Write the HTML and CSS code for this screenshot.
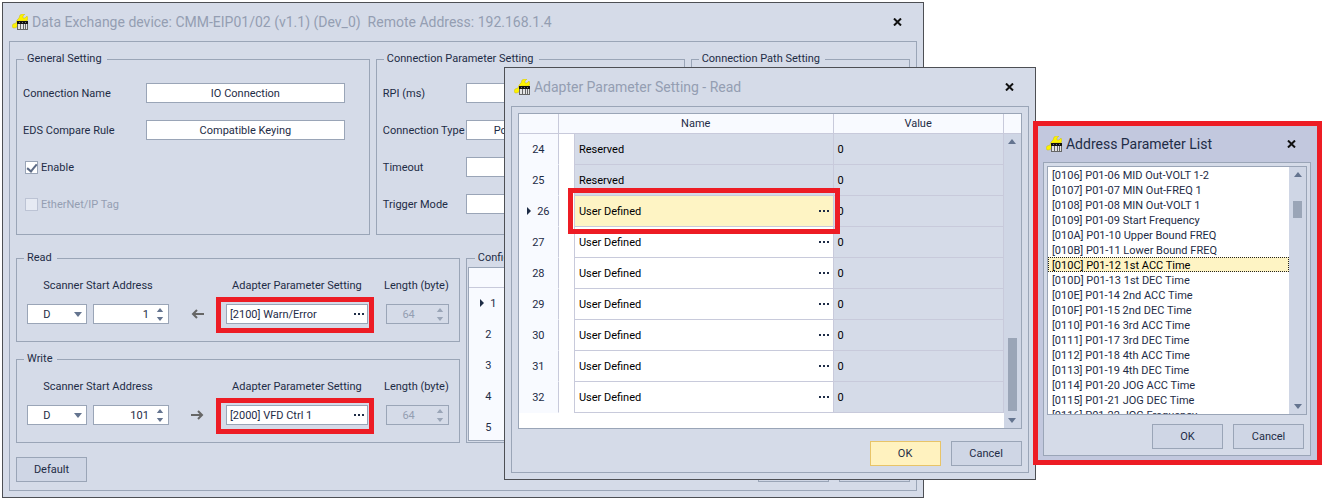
FILE: index.html
```html
<!DOCTYPE html>
<html lang="en">
  <head>
    <meta charset="UTF-8" />
    <meta name="viewport" content="width=device-width, initial-scale=1.0" />
    <title>Data Exchange</title>
    <link rel="stylesheet" href="styles.css">
  </head>
  <body>
    <!-- shared icons -->
    <svg class="sprite" aria-hidden="true">
      <symbol id="icon-app" viewBox="0 0 16 16">
        <path d="M1 14 L0 12 L1 10 L4 9 L5 6 L7 4 L8 1 L10 0 H13 L11 2 L11 4 H13 L15 2 L16 4 L15 7 H7 L6 10 L5 13 L3 14 Z" fill="#fdf200" stroke="#c4b62a" stroke-width="0.5" />
        <path d="M5 7h11v3h-11z" fill="#111" />
        <path d="M5 10h11v6h-11z" fill="#666" />
        <path d="M6 10h2v5h-2zM9 10h2v5h-2zM12 10h1v5h-1zM14 10h1v5h-1z" fill="#e4e4e4" />
        <path d="M7 8h1v1h-1zM10 8h1v1h-1zM13 8h1v1h-1z" fill="#777" />
      </symbol>
      <symbol id="icon-close" viewBox="0 0 9 8">
        <path d="M1 0.5 L8 7.5 M8 0.5 L1 7.5" stroke="#111" stroke-width="2" fill="none" />
      </symbol>
      <symbol id="icon-up" viewBox="0 0 8 5"><path d="M0 5 L4 0 L8 5 Z" fill="currentColor" /></symbol>
      <symbol id="icon-down" viewBox="0 0 8 5"><path d="M0 0 H8 L4 5 Z" fill="currentColor" /></symbol>
      <symbol id="icon-dots" viewBox="0 0 10 2"><path d="M0 0h2v2h-2zM4 0h2v2h-2zM8 0h2v2h-2z" fill="#1e2c46" /></symbol>
      <symbol id="icon-row" viewBox="0 0 4 8"><path d="M0 0 L4 4 L0 8 Z" fill="#1e2c46" /></symbol>
      <symbol id="icon-left" viewBox="0 0 13 10">
        <path d="M6 1 L2 5 L6 9 M2 5 H13" stroke="#666" stroke-width="2" fill="none" />
      </symbol>
      <symbol id="icon-right" viewBox="0 0 13 10">
        <path d="M7 1 L11 5 L7 9 M11 5 H0" stroke="#666" stroke-width="2" fill="none" />
      </symbol>
    </svg>

    <main class="desktop">
      <section class="window window-main">
        <header class="titlebar">
          <svg class="app-icon"><use href="#icon-app" /></svg>
          <h1>Data Exchange device: CMM-EIP01/02 (v1.1) (Dev_0)&nbsp; Remote Address: 192.168.1.4</h1>
          <button class="close" aria-label="Close"><svg><use href="#icon-close" /></svg></button>
        </header>
        <div class="panel">
          <div class="top-groups">
            <fieldset class="general">
              <legend>General Setting</legend>
              <div class="fields">
                <div class="field">
                  <label for="connName">Connection Name</label>
                  <input class="box" id="connName" type="text" value="IO Connection" />
                </div>
                <div class="field">
                  <label for="edsRule">EDS Compare Rule</label>
                  <input class="box" id="edsRule" type="text" value="Compatible Keying" />
                </div>
                <label class="check"><input type="checkbox" checked /><span>Enable</span></label>
                <label class="check disabled"><input type="checkbox" disabled /><span>EtherNet/IP Tag</span></label>
              </div>
            </fieldset>

            <fieldset class="connection">
              <legend>Connection Parameter Setting</legend>
              <div class="fields">
                <div class="field">
                  <label for="rpi">RPI (ms)</label>
                  <input class="box" id="rpi" type="text" />
                </div>
                <div class="field">
                  <label for="connType">Connection Type</label>
                  <input class="box" id="connType" type="text" value="Point to Point" />
                </div>
                <div class="field">
                  <label for="timeout">Timeout</label>
                  <input class="box" id="timeout" type="text" />
                </div>
                <div class="field">
                  <label for="trigger">Trigger Mode</label>
                  <input class="box" id="trigger" type="text" />
                </div>
              </div>
            </fieldset>

            <fieldset>
              <legend>Connection Path Setting</legend>
            </fieldset>
          </div>

          <div class="bottom-groups">
            <div class="transfers">
              <fieldset>
                <legend>Read</legend>
                <div class="transfer">
                  <label for="readAddress">Scanner Start Address</label>
                  <label class="col-adapter" for="readParam">Adapter Parameter Setting</label>
                  <label class="col-length" for="readLength">Length (byte)</label>
                  <div class="address">
                    <div class="box combo">
                      <select aria-label="Read device"><option>D</option></select>
                      <svg class="arrow"><use href="#icon-down" /></svg>
                    </div>
                    <div class="box spin">
                      <input id="readAddress" type="number" value="1" />
                      <span class="spin-arrows">
                        <button aria-label="Increase"><svg class="arrow"><use href="#icon-up" /></svg></button>
                        <button aria-label="Decrease"><svg class="arrow"><use href="#icon-down" /></svg></button>
                      </span>
                    </div>
                  </div>
                  <svg class="direction"><use href="#icon-left" /></svg>
                  <div class="box picker marked">
                    <input id="readParam" type="text" value="[2100] Warn/Error" />
                    <button class="dots" aria-label="Browse"><svg><use href="#icon-dots" /></svg></button>
                  </div>
                  <div class="box spin length">
                    <input id="readLength" type="number" value="64" disabled />
                    <span class="spin-arrows">
                      <button disabled aria-label="Increase"><svg class="arrow"><use href="#icon-up" /></svg></button>
                      <button disabled aria-label="Decrease"><svg class="arrow"><use href="#icon-down" /></svg></button>
                    </span>
                  </div>
                </div>
              </fieldset>

              <fieldset>
                <legend>Write</legend>
                <div class="transfer">
                  <label for="writeAddress">Scanner Start Address</label>
                  <label class="col-adapter" for="writeParam">Adapter Parameter Setting</label>
                  <label class="col-length" for="writeLength">Length (byte)</label>
                  <div class="address">
                    <div class="box combo">
                      <select aria-label="Write device"><option>D</option></select>
                      <svg class="arrow"><use href="#icon-down" /></svg>
                    </div>
                    <div class="box spin">
                      <input id="writeAddress" type="number" value="101" />
                      <span class="spin-arrows">
                        <button aria-label="Increase"><svg class="arrow"><use href="#icon-up" /></svg></button>
                        <button aria-label="Decrease"><svg class="arrow"><use href="#icon-down" /></svg></button>
                      </span>
                    </div>
                  </div>
                  <svg class="direction"><use href="#icon-right" /></svg>
                  <div class="box picker marked">
                    <input id="writeParam" type="text" value="[2000] VFD Ctrl 1" />
                    <button class="dots" aria-label="Browse"><svg><use href="#icon-dots" /></svg></button>
                  </div>
                  <div class="box spin length">
                    <input id="writeLength" type="number" value="64" disabled />
                    <span class="spin-arrows">
                      <button disabled aria-label="Increase"><svg class="arrow"><use href="#icon-up" /></svg></button>
                      <button disabled aria-label="Decrease"><svg class="arrow"><use href="#icon-down" /></svg></button>
                    </span>
                  </div>
                </div>
              </fieldset>
            </div>

            <fieldset class="config">
              <legend>Configuration</legend>
              <div class="grid-view config-list">
                <table>
                  <thead><tr><th class="num"></th><th></th></tr></thead>
                  <tbody>
                    <tr><td class="num"><svg class="row-mark"><use href="#icon-row" /></svg>1</td><td></td></tr>
                    <tr><td class="num">2</td><td></td></tr>
                    <tr><td class="num">3</td><td></td></tr>
                    <tr><td class="num">4</td><td></td></tr>
                    <tr><td class="num">5</td><td></td></tr>
                  </tbody>
                </table>
              </div>
            </fieldset>
          </div>

          <footer class="actions">
            <button class="btn btn-default">Default</button>
            <button class="btn">OK</button>
            <button class="btn">Cancel</button>
          </footer>
        </div>
      </section>

      <section class="window window-adapter">
        <header class="titlebar">
          <svg class="app-icon"><use href="#icon-app" /></svg>
          <h1>Adapter Parameter Setting - Read</h1>
          <button class="close" aria-label="Close"><svg><use href="#icon-close" /></svg></button>
        </header>
        <div class="panel">
          <div class="grid-view">
            <table>
              <colgroup>
                <col class="w-num" /><col class="w-indent" /><col /><col class="w-value" />
              </colgroup>
              <thead>
                <tr><th></th><th colspan="2">Name</th><th>Value</th></tr>
              </thead>
              <tbody>
                <tr class="reserved"><td class="num">24</td><td class="indent"></td><td class="name">Reserved</td><td class="value">0</td></tr>
                <tr class="reserved"><td class="num">25</td><td class="indent"></td><td class="name">Reserved</td><td class="value">0</td></tr>
                <tr class="selected">
                  <td class="num"><svg class="row-mark"><use href="#icon-row" /></svg>26</td><td class="indent"></td>
                  <td class="name marked"><div class="cell">User Defined<button class="dots" aria-label="Browse"><svg><use href="#icon-dots" /></svg></button></div></td>
                  <td class="value">0</td>
                </tr>
                <tr><td class="num">27</td><td class="indent"></td><td class="name"><div class="cell">User Defined<button class="dots" aria-label="Browse"><svg><use href="#icon-dots" /></svg></button></div></td><td class="value">0</td></tr>
                <tr><td class="num">28</td><td class="indent"></td><td class="name"><div class="cell">User Defined<button class="dots" aria-label="Browse"><svg><use href="#icon-dots" /></svg></button></div></td><td class="value">0</td></tr>
                <tr><td class="num">29</td><td class="indent"></td><td class="name"><div class="cell">User Defined<button class="dots" aria-label="Browse"><svg><use href="#icon-dots" /></svg></button></div></td><td class="value">0</td></tr>
                <tr><td class="num">30</td><td class="indent"></td><td class="name"><div class="cell">User Defined<button class="dots" aria-label="Browse"><svg><use href="#icon-dots" /></svg></button></div></td><td class="value">0</td></tr>
                <tr><td class="num">31</td><td class="indent"></td><td class="name"><div class="cell">User Defined<button class="dots" aria-label="Browse"><svg><use href="#icon-dots" /></svg></button></div></td><td class="value">0</td></tr>
                <tr><td class="num">32</td><td class="indent"></td><td class="name"><div class="cell">User Defined<button class="dots" aria-label="Browse"><svg><use href="#icon-dots" /></svg></button></div></td><td class="value">0</td></tr>
              </tbody>
            </table>
            <div class="scroll-column">
              <div class="scroll-head"></div>
              <div class="scrollbar at-end">
                <svg class="arrow"><use href="#icon-up" /></svg>
                <div class="thumb"></div>
                <svg class="arrow"><use href="#icon-down" /></svg>
              </div>
            </div>
          </div>
          <footer class="actions">
            <button class="btn primary">OK</button>
            <button class="btn">Cancel</button>
          </footer>
        </div>
      </section>

      <section class="window window-list">
        <header class="titlebar">
          <svg class="app-icon"><use href="#icon-app" /></svg>
          <h1>Address Parameter List</h1>
          <button class="close" aria-label="Close"><svg><use href="#icon-close" /></svg></button>
        </header>
        <div class="panel">
          <div class="list-view">
            <select size="17" aria-label="Address Parameter List">
              <option>[0106] P01-06 MID Out-VOLT 1-2</option>
              <option>[0107] P01-07 MIN Out-FREQ 1</option>
              <option>[0108] P01-08 MIN Out-VOLT 1</option>
              <option>[0109] P01-09 Start Frequency</option>
              <option>[010A] P01-10 Upper Bound FREQ</option>
              <option>[010B] P01-11 Lower Bound FREQ</option>
              <option selected>[010C] P01-12 1st ACC Time</option>
              <option>[010D] P01-13 1st DEC Time</option>
              <option>[010E] P01-14 2nd ACC Time</option>
              <option>[010F] P01-15 2nd DEC Time</option>
              <option>[0110] P01-16 3rd ACC Time</option>
              <option>[0111] P01-17 3rd DEC Time</option>
              <option>[0112] P01-18 4th ACC Time</option>
              <option>[0113] P01-19 4th DEC Time</option>
              <option>[0114] P01-20 JOG ACC Time</option>
              <option>[0115] P01-21 JOG DEC Time</option>
              <option>[0116] P01-22 JOG Frequency</option>
            </select>
            <div class="scrollbar near-start">
              <svg class="arrow"><use href="#icon-up" /></svg>
              <div class="thumb"></div>
              <svg class="arrow"><use href="#icon-down" /></svg>
            </div>
          </div>
          <footer class="actions">
            <button class="btn">OK</button>
            <button class="btn">Cancel</button>
          </footer>
        </div>
      </section>
    </main>
  </body>
</html>
```

FILE: styles.css
```css
:root {
  --face: #d5dbe8;
  --line: #9aa5b7;
  --grid-line: #c8cadb;
  --text: #1e2c46;
  --muted: #949eb2;
  --header: #f8faff;
  --button: #cfd6e5;
  --yellow: #fef4c4;
  --red: #ed1c24;
}

* {
  box-sizing: border-box;
}

body {
  margin: 0;
  background-color: #fff;
  color: var(--text);
  font-family: Roboto, Tahoma, sans-serif;
  font-size: 11px;
  line-height: 14px;
}

input,
select,
button {
  margin: 0;
  padding: 0;
  border: none;
  background: none;
  border-radius: 0;
  outline: none;
  color: inherit;
  font: inherit;
}

svg {
  display: block;
  flex: none;
}

.sprite {
  position: absolute;
  width: 0;
  height: 0;
}

.desktop {
  position: relative;
  min-height: 100vh;
  overflow: hidden;
}

/* Windows */
.window {
  position: absolute;
  padding: 0 6px 6px;
  background-color: var(--face);
  border: 1px solid #4d4f54;
}

.window-main {
  left: 2px;
  top: 2px;
  width: 69.5%;
}

.window-adapter {
  left: 38%;
  top: 67px;
  width: 40.1%;
}

.window-list {
  left: 77.9%;
  top: 121px;
  width: 21.8%;
  padding: 0 6px 4px 5px;
  border: 5px solid var(--red);
  background-color: #c2c8de;
}

.titlebar {
  display: flex;
  align-items: center;
  gap: 4px;
  height: 38px;
  padding: 0 15px 0 3px;
}

.titlebar h1 {
  flex: 1;
  min-width: 0;
  margin: 0;
  color: var(--muted);
  font-size: 14px;
  font-weight: normal;
  line-height: 20px;
  white-space: nowrap;
}

.app-icon {
  width: 16px;
  height: 16px;
}

.close svg {
  width: 9px;
  height: 8px;
}

.window-list .titlebar {
  height: 36px;
}

.window-list .titlebar h1 {
  color: var(--text);
}

.panel {
  padding: 6px;
  border: 1px solid var(--line);
  background-color: var(--face);
}

.window-main .panel {
  padding: 10px 6px 8px;
}

/* Groups */
fieldset {
  min-width: 0;
  margin: 0;
  padding: 0;
  border: 1px solid var(--line);
}

legend {
  margin-left: 7px;
  padding: 0 5px 0 3px;
}

.top-groups {
  display: grid;
  grid-template-columns: 354fr 309fr 219fr;
  gap: 6px;
  margin-bottom: 16px;
}

.fields {
  display: grid;
  gap: 17px;
  padding: 17px 24px 20px 6px;
}

.connection .fields {
  padding-right: 96px;
}

.field {
  display: grid;
  grid-template-columns: 123px 1fr;
  align-items: center;
  height: 20px;
}

.connection .field {
  grid-template-columns: 83px 1fr;
}

.field label,
.check span {
  padding-top: 2px;
  white-space: nowrap;
}

.box {
  width: 100%;
  min-width: 0;
  height: 20px;
  border: 1px solid var(--line);
  background-color: #fff;
}

.field .box {
  text-align: center;
}

.check {
  display: flex;
  align-items: center;
  gap: 3px;
  height: 20px;
  margin-left: 2px;
}

.check input {
  appearance: none;
  display: flex;
  justify-content: center;
  width: 13px;
  height: 13px;
  border: 1px solid var(--line);
  background-color: #fff;
}

.check input:checked::after {
  content: "";
  width: 4px;
  height: 8px;
  border: solid #5c6a85;
  border-width: 0 2px 2px 0;
  transform: rotate(40deg);
}

.check.disabled {
  color: var(--muted);
}

.check.disabled input {
  border-color: #bcc3d4;
  background-color: #e6eaf3;
}

.bottom-groups {
  display: grid;
  grid-template-columns: 1fr 1fr;
  gap: 6px;
}

.transfers {
  display: grid;
  gap: 10px;
}

.transfer {
  display: grid;
  grid-template-columns:
    minmax(0, 142fr) minmax(0, 57fr) minmax(0, 142fr)
    minmax(0, 18fr) minmax(0, 63fr);
  row-gap: 11px;
  align-items: center;
  padding: 14px 10px 17px;
}

.transfer label {
  justify-self: center;
  white-space: nowrap;
}

.transfer .col-adapter {
  grid-column: 3;
}

.transfer .col-length {
  grid-column: 5;
  justify-self: end;
}

.address {
  grid-column: 1;
  display: grid;
  grid-template-columns: minmax(0, 60fr) minmax(0, 76fr);
  gap: 6px;
}

.direction {
  justify-self: center;
  width: 13px;
  height: 10px;
}

.combo,
.spin,
.picker {
  display: flex;
  align-items: center;
}

.combo select,
.spin input,
.picker input {
  flex: 1;
  width: 0;
  min-width: 0;
  padding-top: 1px;
}

.arrow {
  width: 8px;
  height: 5px;
  color: #64748f;
}

.combo {
  padding-right: 4px;
}

.combo select {
  appearance: none;
  padding-right: 8px;
  text-align: center;
}

.spin {
  padding-right: 4px;
}

.spin input {
  appearance: textfield;
  padding-right: 7px;
  text-align: right;
}

.spin input::-webkit-inner-spin-button {
  display: none;
}

.spin-arrows {
  display: grid;
  gap: 5px;
}

.spin-arrows svg {
  height: 4px;
}

.picker {
  position: relative;
  padding: 0 3px;
}

.dots svg {
  width: 10px;
  height: 2px;
}

.dots {
  flex: none;
}

.transfer .length {
  grid-column: 5;
  background-color: var(--face);
  color: var(--muted);
}

.length .arrow {
  color: var(--line);
}

.length input {
  padding-right: 21px;
}

/* Red frame laid over the marked control */
.marked::after {
  content: "";
  position: absolute;
  inset: -8px -7px -10px -11px;
  border: 5px solid var(--red);
  pointer-events: none;
}

/* Tables */
.grid-view {
  display: flex;
  border: 1px solid var(--line);
  background-color: #fff;
}

table {
  flex: 1;
  align-self: flex-start;
  min-width: 0;
  table-layout: fixed;
  border-collapse: separate;
  border-spacing: 0;
}

.w-num,
th.num {
  width: 40px;
}

.w-indent {
  width: 16px;
}

.w-value {
  width: 170px;
}

th,
td {
  padding: 0;
  border-right: 1px solid var(--grid-line);
  border-bottom: 1px solid var(--grid-line);
}

th {
  height: 20px;
  background-color: var(--header);
  font-weight: normal;
}

td {
  height: 31px;
  padding-top: 2px;
}

td.num {
  border-bottom-color: var(--header);
  background-color: var(--header);
  text-align: center;
}

.row-mark {
  display: inline-block;
  width: 4px;
  height: 8px;
  margin-right: 6px;
}

.indent {
  border-bottom: none;
}

.name,
.value {
  padding-left: 4px;
  color: #000;
}

.value,
.reserved .name {
  background-color: var(--face);
}

.selected .name {
  background-color: var(--yellow);
}

.name.marked {
  position: relative;
}

.name.marked::after {
  inset: -8px -7px -8px -7px;
}

.cell {
  display: flex;
  align-items: center;
  justify-content: space-between;
  padding-right: 4px;
}

.cell .dots {
  padding-bottom: 2px;
}

.window-adapter .grid-view table {
  margin-bottom: 15px;
}

.config {
  padding: 2px 1px 1px;
}

.config-list {
  height: 174px;
  overflow: hidden;
}

/* Scrollbars */
.scroll-column {
  display: flex;
  flex-direction: column;
  width: 17px;
}

.scroll-head {
  height: 20px;
  border-bottom: 1px solid var(--grid-line);
  background-color: var(--header);
}

.scrollbar {
  display: flex;
  flex: 1;
  flex-direction: column;
  align-items: center;
  padding: 5px 0;
  background-color: var(--button);
}

.thumb {
  width: 9px;
  background-color: var(--line);
}

.at-end .thumb {
  height: 73px;
  margin: auto 0 7px;
}

.near-start .thumb {
  height: 17px;
  margin: 24px 0 auto;
}

/* Address list */
.window-list .panel {
  padding: 3px;
}

.list-view {
  display: flex;
  height: 249px;
  border: 1px solid var(--line);
  background-color: #fff;
}

.list-view select {
  flex: 1;
  min-width: 0;
  height: 247px;
  overflow: hidden;
  scrollbar-width: none;
}

.list-view option {
  height: 15px;
  min-height: 15px;
  padding: 2px 4px 0;
  color: var(--text);
  line-height: 13px;
}

.list-view option:checked {
  padding: 1px 3px 0;
  border: 1px dotted #222;
  background: linear-gradient(var(--yellow), var(--yellow));
  color: #000;
  line-height: 12px;
}

.list-view .scrollbar {
  flex: none;
  width: 17px;
}

/* Buttons */
.actions {
  display: flex;
  justify-content: flex-end;
  gap: 10px;
  margin-top: 12px;
}

.window-main .actions {
  margin-top: 14px;
}

.window-list .actions {
  margin: 9px 3px 3px;
}

.btn {
  width: 71px;
  height: 25px;
  padding-top: 1px;
  border: 1px solid var(--line);
  background-color: var(--button);
  cursor: pointer;
}

.btn-default {
  margin-right: auto;
}

.btn.primary {
  border-color: #e8c468;
  background-color: #fff2bf;
}
```
